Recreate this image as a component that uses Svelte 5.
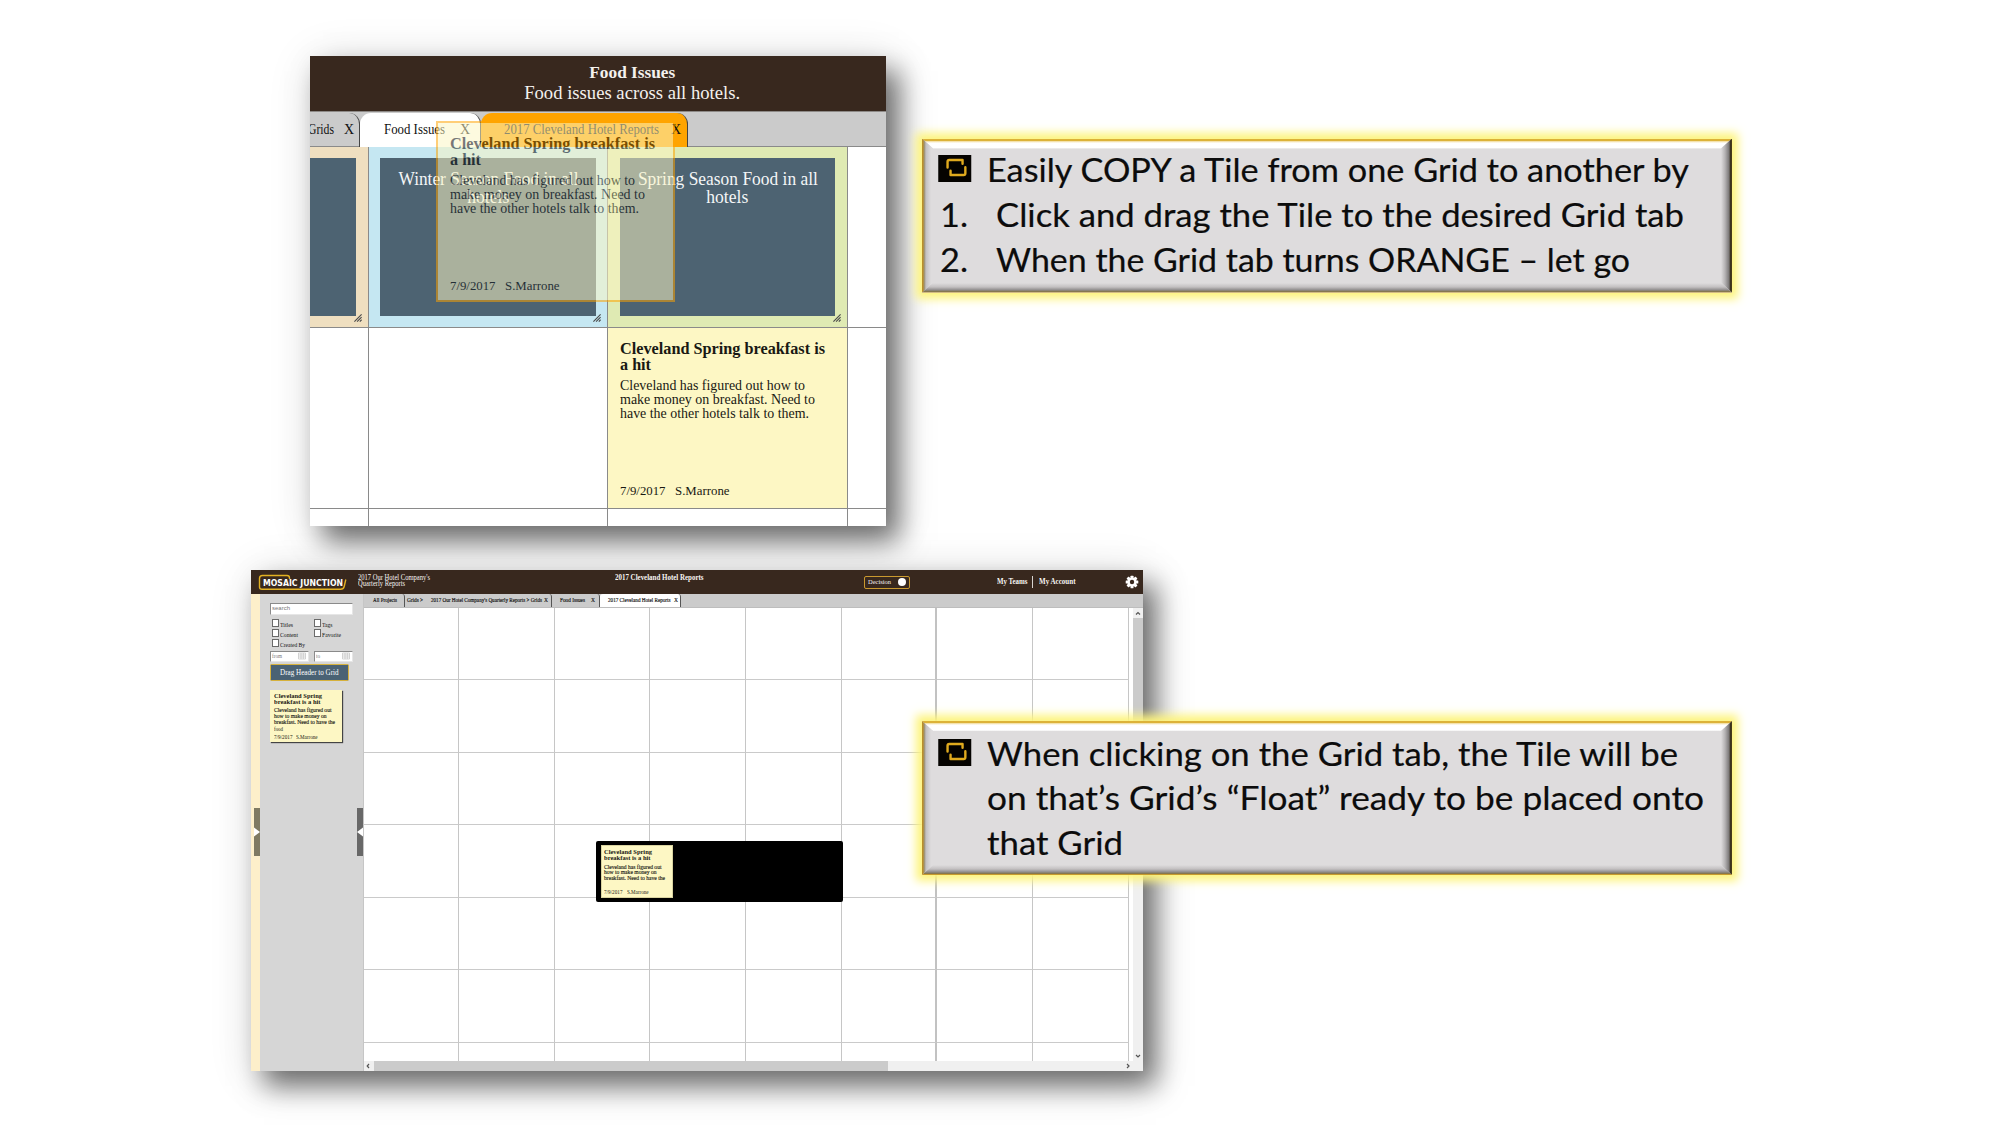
<script>
  // Stretches a line of text horizontally to the given width in pixels.
  function fit(node, width) {
    const natural = node.getBoundingClientRect().width;
    if (width && natural) node.style.transform = `scaleX(${width / natural})`;
  }

  const cells = Array.from({ length: 56 }, (_, i) => i);

  const bigTile = {
    title: [['Cleveland Spring breakfast is', 205], ['a hit', 31]],
    body: [
      ['Cleveland has figured out how to', 185],
      ['make money on breakfast. Need to', 195],
      ['have the other hotels talk to them.', 189]
    ]
  };

  const smallTile = {
    title: [['Cleveland Spring', 48], ['breakfast is a hit', 46.5]],
    body: [
      ['Cleveland has figured out', 57.5],
      ['how to make money on', 52.5],
      ['breakfast. Need to have the', 61]
    ]
  };
</script>

{#snippet line(text, width, kind = '')}
  <span class="line {kind}" use:fit={width}>{text}</span>
{/snippet}

{#snippet tileText(tile)}
  <div class="t-title">
    {#each tile.title as [text, width]}<div>{@render line(text, width)}</div>{/each}
  </div>
  <div class="t-body">
    {#each tile.body as [text, width]}<div>{@render line(text, width)}</div>{/each}
  </div>
{/snippet}

{#snippet edges()}
  <i class="edge top"></i><i class="edge right"></i><i class="edge bottom"></i><i class="edge left"></i>
{/snippet}

{#snippet bullet()}
  <svg class="bullet" viewBox="0 0 33 27">
    <rect width="33" height="27" fill="#050300" />
    <g fill="none" stroke="#e0aa1e" stroke-width="2.4" stroke-linejoin="round" stroke-linecap="round">
      <path d="M9.300 12.500V6.700Q9.300 5 11 5H24.300V8.800" />
      <path d="M12.300 15.800V20H25.400Q27.100 20 27.100 18.300V12.300" />
    </g>
  </svg>
{/snippet}

{#snippet grip()}
  <svg class="grip" viewBox="0 0 10 10">
    <path d="M1 9.500L9 1.500M4 9.500L9 4.500M7 9.500L9 7.500" stroke="#484848" stroke-width="1.200" />
  </svg>
{/snippet}

<main>
  <section class="shot first">
    <header>
      <div class="h1">{@render line('Food Issues', 86, 'mid')}</div>
      <div class="h2">{@render line('Food issues across all hotels.', 216, 'mid')}</div>
    </header>
    <nav>
      <div class="tab grids"><span>{@render line('Grids', 26)}</span><b>X</b></div>
      <div class="tab food"><span>{@render line('Food Issues', 61)}</span><b>X</b></div>
      <div class="tab orange"><span>{@render line('2017 Cleveland Hotel Reports', 155)}</span><b>X</b></div>
    </nav>
    <div class="board">
      <div class="cell tan"><div class="head"></div>{@render grip()}</div>
      <div class="cell blue">
        <div class="head">
          <div>{@render line('Winter Season Food in all', 180, 'mid')}</div>
          <div>{@render line('hotels', 42, 'mid')}</div>
        </div>
        {@render grip()}
      </div>
      <div class="cell green">
        <div class="head">
          <div>{@render line('Spring Season Food in all', 180, 'mid')}</div>
          <div>{@render line('hotels', 42, 'mid')}</div>
        </div>
        {@render grip()}
      </div>
      <div class="cell"></div>
      <div class="cell"></div>
      <div class="cell"></div>
      <div class="cell tile big">
        {@render tileText(bigTile)}
        <div class="t-foot"><div class="date">{@render line('7/9/2017', 45.5)}</div><div>{@render line('S.Marrone', 54.5)}</div></div>
      </div>
      <div class="cell"></div>
      <div class="cell"></div>
      <div class="cell"></div>
      <div class="cell"></div>
      <div class="cell"></div>
    </div>
    <div class="tile big drag">
      {@render tileText(bigTile)}
      <div class="t-foot"><div class="date">{@render line('7/9/2017', 45.5)}</div><div>{@render line('S.Marrone', 54.5)}</div></div>
    </div>
  </section>

  <section class="shot second">
    <header>
      <div class="logo">
        <svg viewBox="0 0 90 17">
          <path d="M1.500 12V4.500Q1.500 1.500 4.500 1.500H29Q31.500 1.500 31.500 4V5M1.500 11V13Q1.500 15.300 4 15.300H82.500Q85.500 15.300 86.200 12.500L87.800 5.500" fill="none" stroke="#e3b223" stroke-width="1.4" />
        </svg>
        <div class="word">{@render line('MOSAIC JUNCTION', 80)}</div>
      </div>
      <div class="company">
        <div>{@render line("2017 Our Hotel Company's", 72)}</div>
        <div>{@render line('Quarterly Reports', 47)}</div>
      </div>
      <div class="current">{@render line('2017 Cleveland Hotel Reports', 88.5)}</div>
      <div class="decision"><span>{@render line('Decision', 23)}</span><i></i></div>
      <div class="link teams">{@render line('My Teams', 30.5)}</div>
      <div class="link account">{@render line('My Account', 36.5)}</div>
      <svg class="gear" viewBox="-8 -8 16 16">
        <g fill="#fff">
          <rect x="-1.500" y="-6.300" width="3" height="12.600" rx=".5" />
          <rect x="-1.500" y="-6.300" width="3" height="12.600" rx=".5" transform="rotate(45)" />
          <rect x="-1.500" y="-6.300" width="3" height="12.600" rx=".5" transform="rotate(90)" />
          <rect x="-1.500" y="-6.300" width="3" height="12.600" rx=".5" transform="rotate(135)" />
          <circle r="4.600" />
        </g>
        <circle r="2.200" fill="#38281e" />
      </svg>
    </header>
    <div class="work">
      <div class="strip">
        <svg class="handle" viewBox="0 0 6 48"><rect width="6" height="48" fill="#7f7a62" /><path d="M0 19.500L6 24L0 28.500Z" fill="#fff" /></svg>
      </div>
      <aside>
        <div class="tools">
          <div class="input search">{@render line('search', 18)}</div>
          <div class="checks">
            <div><i></i>{@render line('Titles', 13)}</div>
            <div><i></i>{@render line('Tags', 10.5)}</div>
            <div><i></i>{@render line('Content', 18)}</div>
            <div><i></i>{@render line('Favorite', 19)}</div>
            <div><i></i>{@render line('Created By', 25)}</div>
          </div>
          <div class="dates">
            {#each [['from', 10], ['to', 4]] as [text, width]}
              <div class="input">
                {@render line(text, width)}
                <svg viewBox="0 0 8 7"><path d="M.5 .5H7.500V6.500H.5ZM.5 2.500H7.500M.5 4.500H7.500M3 .5V6.500M5.300 .5V6.500" fill="none" stroke="#bbb" stroke-width=".6" /></svg>
              </div>
            {/each}
          </div>
          <div class="dragbtn">{@render line('Drag Header to Grid', 58.5, 'mid')}</div>
          <div class="tile small">
            {@render tileText(smallTile)}
            <div class="t-more">{@render line('food', 9)}</div>
            <div class="t-foot"><div class="date">{@render line('7/9/2017', 18.5)}</div><div>{@render line('S.Marrone', 21.5)}</div></div>
          </div>
        </div>
        <svg class="handle" viewBox="0 0 6 48"><rect width="6" height="48" fill="#686868" /><path d="M6 19.500L0 24L6 28.500Z" fill="#fff" /></svg>
      </aside>
      <div class="pane">
        <nav>
          <div class="mtab a">{@render line('All Projects', 24)}</div>
          <div class="mtab b">
            <span class="crumb">{@render line('Grids >', 16)}</span>
            <span class="path">{@render line("2017 Our Hotel Company's Quarterly Reports > Grids", 111)}</span><b>X</b>
          </div>
          <div class="mtab c"><span>{@render line('Food Issues', 25)}</span><b>X</b></div>
          <div class="mtab d"><span class="name">{@render line('2017 Cleveland Hotel Reports', 62.5)}</span><b>X</b></div>
        </nav>
        <div class="scroller">
          <div class="grid">
            {#each cells as cell (cell)}<i class:heavy={cell % 8 === 5}></i>{/each}
          </div>
          <div class="vbar">
            <svg viewBox="0 0 10 10"><path d="M3 6.500L5 4.500L7 6.500" /></svg>
            <div class="thumb"></div>
            <svg viewBox="0 0 10 10"><path d="M3 4L5 6L7 4" /></svg>
          </div>
        </div>
        <div class="hbar">
          <svg viewBox="0 0 10 10"><path d="M5 3L3.200 5L5 7" /></svg>
          <div class="thumb"></div>
          <svg class="end" viewBox="0 0 10 10"><path d="M4 3L6 5L4 7" /></svg>
        </div>
      </div>
    </div>
    <div class="float">
      <div class="tile small">
        {@render tileText(smallTile)}
        <div class="t-foot"><div class="date">{@render line('7/9/2017', 18.5)}</div><div>{@render line('S.Marrone', 21.5)}</div></div>
      </div>
    </div>
  </section>

  <section class="callout one">
    {@render edges()}
    <div class="row">{@render bullet()}<div>{@render line('Easily COPY a Tile from one Grid to another by', 702)}</div></div>
    <div class="row num"><em>{@render line('1.', 28)}</em><div>{@render line('Click and drag the Tile to the desired Grid tab', 688)}</div></div>
    <div class="row num"><em>{@render line('2.', 28)}</em><div>{@render line('When the Grid tab turns ORANGE – let go', 634)}</div></div>
  </section>

  <section class="callout two">
    {@render edges()}
    <div class="row">
      {@render bullet()}
      <div>
        <div>{@render line('When clicking on the Grid tab, the Tile will be', 691)}</div>
        <div>{@render line('on that’s Grid’s “Float” ready to be placed onto', 717)}</div>
        <div>{@render line('that Grid', 136)}</div>
      </div>
    </div>
  </section>
</main>

<style>
  :global(body) { background: #fff; }
  * { box-sizing: border-box; }
  main {
    position: relative;
    width: 2000px;
    height: 1125px;
    overflow: hidden;
    background: #fff;
    font-family: "Liberation Serif", serif;
  }
  .line { display: inline-block; white-space: pre; transform-origin: 0 50%; }
  .line.mid { transform-origin: 50% 50%; }
  b { font-weight: 400; }

  .shot {
    position: absolute;
    box-shadow: 13px 15px 26px rgba(0, 0, 0, .54), 4px 6px 44px rgba(0, 0, 0, .14);
  }
  .first { left: 310px; top: 56px; width: 576px; height: 470px; background: #fff; }
  .second { left: 251px; top: 570px; width: 892px; height: 501px; background: #fff; }

  /* first screen */
  .first header {
    height: 55px;
    padding: 7px 0 0 69px;
    background: #38281e;
    color: #f4f1ee;
    text-align: center;
  }
  .h1 { font-size: 17px; font-weight: 700; line-height: 20px; }
  .h2 { font-size: 18.500px; line-height: 21px; }
  .first nav {
    display: flex;
    height: 36px;
    padding-top: 1px;
    background: #cbcbcb;
    border-top: 1px solid #8e8a87;
    border-bottom: 1px solid #8a8a8a;
    font-size: 14px;
    line-height: 34px;
    color: #111;
  }
  .tab {
    display: flex;
    justify-content: space-between;
    height: 34px;
    overflow: hidden;
    border-right: 1.500px solid #444;
    border-radius: 0 11px 0 0;
  }
  .grids { width: 50px; padding: 0 5px 0 0; }
  .grids > span { margin-left: -2px; }
  .food { width: 121px; padding: 0 10px 0 24px; background: #fff; border-radius: 11px 11px 0 0; }
  .orange { width: 207px; padding: 0 6px 0 23px; background: #ffa400; border-radius: 11px 11px 0 0; }
  .orange > span { width: 156px; }
  .board {
    display: grid;
    grid-template-columns: 59px 239px 240px 38px;
    grid-template-rows: 181px 181px 17px;
    overflow: hidden;
  }
  .cell { position: relative; border-right: 1px solid #8a8a8a; border-bottom: 1px solid #8a8a8a; }
  .cell:nth-child(4n) { border-right: 0; }
  .cell:nth-child(n + 9) { border-bottom: 0; }
  .tan { background: #efdfc0; padding: 11px 12px 11px 0; }
  .blue { background: #c5e7f2; padding: 11px; }
  .green { background: #dfeab3; padding: 11px 12px; }
  .head {
    height: 158px;
    padding-top: 13px;
    background: #4d6372;
    color: #f4f6f7;
    text-align: center;
    font-size: 17.800px;
    line-height: 17.700px;
  }
  .head > div { display: flex; justify-content: center; }
  .grip { position: absolute; right: 5px; bottom: 5px; width: 10px; height: 9px; }

  .tile { display: flex; flex-direction: column; background: #fdf7c4; color: #191913; }
  .big { padding: 13px 0 10px 12px; }
  .big .t-title { font-size: 16.800px; font-weight: 700; line-height: 16.300px; }
  .big .t-body { margin-top: 4px; font-size: 14.500px; line-height: 14px; }
  .big .t-foot { display: flex; gap: 9px; margin-top: auto; font-size: 13.500px; line-height: 14px; }
  .big .date { width: 46px; }
  .drag {
    position: absolute;
    left: 126px;
    top: 65px;
    width: 239px;
    height: 181px;
    border: 2px solid #ffa400;
    opacity: .53;
    color: #000;
    padding-bottom: 7.500px;
  }

  /* second screen */
  .second header { display: flex; height: 24px; background: #38281e; color: #f7f5f3; }
  .logo { position: relative; width: 106.500px; padding: 8px 0 0 11.500px; }
  .logo svg { position: absolute; left: 6.500px; top: 3.500px; width: 90px; height: 17px; }
  .word { font: 700 9px/10px "DejaVu Sans", sans-serif; color: #fff; }
  .company { width: 257.500px; padding-top: 4.500px; font-size: 7.600px; line-height: 6.700px; }
  .current { width: 249px; padding-top: 3.500px; font-size: 7.600px; font-weight: 700; line-height: 8px; }
  .decision {
    display: flex;
    justify-content: space-between;
    align-items: center;
    width: 46px;
    height: 12.500px;
    margin-top: 6px;
    padding: 0 3px 0 3px;
    border: 1px solid #c9992f;
    border-radius: 2px;
    font-size: 7px;
    line-height: 10px;
  }
  .decision i { width: 8px; height: 8px; border-radius: 50%; background: #fff; }
  .link { height: 12px; margin-top: 6px; font-size: 7.200px; font-weight: 700; line-height: 12px; }
  .teams { width: 36px; margin-left: 86.500px; border-right: 1px solid #d8d4d0; }
  .account { width: 85px; padding-left: 6px; }
  .gear { flex: none; width: 16px; height: 16px; margin-top: 4px; margin-left: 6px; }

  .work { display: flex; height: 477px; }
  .strip { width: 9px; padding: 214px 0 0 3px; background: #fdefca; }
  .handle { display: block; flex: none; width: 6px; height: 48px; }
  aside { display: flex; width: 104px; background: #d6d6d6; border-right: 1px solid #c6c6c6; }
  aside .handle { margin-top: 214px; }
  .tools { width: 97px; padding: 9px 0 0 10px; font-size: 6.600px; line-height: 7px; color: #111; }
  .input { background: #fff; border: 1px solid #e6e6e6; border-top-color: #8a8a8a; border-left-color: #8a8a8a; color: #777; padding-left: 1px; }
  .search { width: 83px; height: 12px; font: 6px/9px "Liberation Sans", sans-serif; }
  .checks {
    display: grid;
    grid-template-columns: 42px 45px;
    grid-template-rows: 10px 10.500px 8px;
    margin-top: 3.500px;
    padding-left: 1.500px;
  }
  .checks div { display: flex; align-items: flex-start; gap: 1.500px; line-height: 11px; }
  .checks i { flex: none; width: 7px; height: 8px; background: #fff; border: 1px solid #6a6a6a; }
  .dates { display: flex; gap: 5.500px; margin-top: 4px; }
  .dates .input { display: flex; justify-content: space-between; width: 38.500px; height: 10.500px; padding-right: 2px; font-size: 5.500px; line-height: 9px; }
  .dates svg { width: 8px; height: 8px; }
  .dragbtn {
    width: 78.500px;
    height: 17px;
    margin-top: 2.500px;
    background: #4a6274;
    border: 1.500px solid #d6b13c;
    border-radius: 1.500px;
    color: #fff;
    font-size: 7.600px;
    line-height: 15px;
    text-align: center;
  }
  .small { width: 72.500px; padding: 3.500px 0 2.500px 3.500px; }
  .tools .small { width: 71.500px; height: 52.500px; margin-top: 8.500px; box-shadow: 1px 1px 1px #444; }
  .small .t-title { font-size: 7.100px; font-weight: 700; line-height: 6.200px; }
  .small .t-body { margin-top: 2px; font-size: 6.500px; line-height: 5.700px; -webkit-text-stroke: .15px #191913; }
  .small .t-more { margin-top: 1.500px; font-size: 5.500px; line-height: 6px; }
  .small .t-foot { display: flex; gap: 3.500px; margin-top: auto; font-size: 6px; line-height: 6px; }
  .small .date { width: 18.800px; }
  .tools .t-foot { font-size: 6.500px; }

  .pane { display: flex; flex-direction: column; width: 779px; }
  .pane nav {
    display: flex;
    height: 13.500px;
    background: #cbcbcb;
    border-bottom: 1px solid #bdbdbd;
    font-size: 5.500px;
    line-height: 13.500px;
    color: #111;
    -webkit-text-stroke: .15px #111;
  }
  .mtab { display: flex; justify-content: space-between; border-right: 1px solid #555; border-radius: 0 3px 0 0; }
  .a { width: 41px; padding-left: 9px; }
  .b { width: 147px; padding: 0 3px 0 2px; }
  .crumb { width: 22.500px; }
  .path { width: 112px; }
  .c { width: 48px; padding: 0 4px 0 8px; }
  .d { width: 81px; padding: 0 2px 0 8px; background: #fff; border-radius: 3px 3px 0 0; }
  .name { width: 63px; }
  .scroller { display: flex; height: 453.500px; }
  .grid {
    display: grid;
    grid-template-columns: 95px repeat(7, 95.700px);
    grid-auto-rows: 72.500px;
    width: 769px;
    overflow: hidden;
  }
  .grid i { border-right: 1px solid #c6c6c6; border-bottom: 1px solid #cacaca; }
  .grid i.heavy { border-right: 2px solid #c2c2c2; }
  .vbar { display: flex; flex-direction: column; width: 10px; background: #f0f0f0; }
  .hbar { display: flex; height: 10px; background: #f0f0f0; }
  .vbar svg, .hbar svg { flex: none; width: 10px; height: 10px; fill: none; stroke: #555; stroke-width: 1.200; }
  .vbar .thumb { height: 200px; margin-bottom: auto; background: #cbcbcb; }
  .hbar .thumb { width: 514px; background: #cbcbcb; }
  .hbar .end { margin-left: auto; margin-right: 10px; }
  .float {
    position: absolute;
    left: 345.300px;
    top: 270.700px;
    width: 246.500px;
    height: 61.800px;
    padding: 4px 4.700px;
    background: #000;
    border-radius: 2px;
  }
  .float .small { height: 53.500px; padding-left: 2.500px; border: 1px solid #d9d3a0; }

  /* callouts */
  .callout {
    position: absolute;
    left: 922px;
    width: 810px;
    height: 154px;
    background: #dedcdd;
    box-shadow: 0 0 9px 6px #fdf47c;
    font: 32.400px/45px Lato, sans-serif;
    color: #0c0c0c;
    -webkit-text-stroke: .2px #0c0c0c;
  }
  .one { top: 138.500px; padding: 8px 0 0 16px; }
  .two { top: 721px; padding: 10.500px 0 0 16px; }
  .two .row { line-height: 44.700px; }
  .row { display: flex; }
  .bullet { flex: none; width: 33.500px; height: 27px; margin: 8.500px 15px 0 0; }
  .two .bullet { margin-top: 7px; }
  .num em { flex: none; width: 57.500px; padding-left: 2px; font-style: normal; }
  .edge { position: absolute; }
  .top, .bottom { left: 0; right: 0; height: 10px; }
  .left, .right { top: 0; bottom: 0; width: 11px; }
  .top {
    top: 0;
    background: linear-gradient(#dcb238 0 1.500px, #f4e2ad 2.500px, #fff 4px 9px, #efeeee);
    clip-path: polygon(0 0, 100% 0, calc(100% - 11px) 100%, 11px 100%);
  }
  .bottom {
    bottom: 0;
    background: linear-gradient(#dedcdd, #c3c0c1 4px, #8f8c8c 7px, #857750 8.500px, #c79a2c 9px);
    clip-path: polygon(11px 0, calc(100% - 11px) 0, 100% 100%, 0 100%);
  }
  .left {
    left: 0;
    background: linear-gradient(90deg, #b98f2a 0 1px, #a0967c 2.500px, #c3c1c2 4px, #dedcdd 9px);
    clip-path: polygon(0 0, 100% 10px, 100% calc(100% - 10px), 0 100%);
  }
  .right {
    right: 0;
    background: linear-gradient(90deg, #dedcdd, #b5b3b4 4px, #7b7878 8px, #3b3320 9.500px, #4c3f18);
    clip-path: polygon(100% 0, 100% 100%, 0 calc(100% - 10px), 0 10px);
  }
</style>
